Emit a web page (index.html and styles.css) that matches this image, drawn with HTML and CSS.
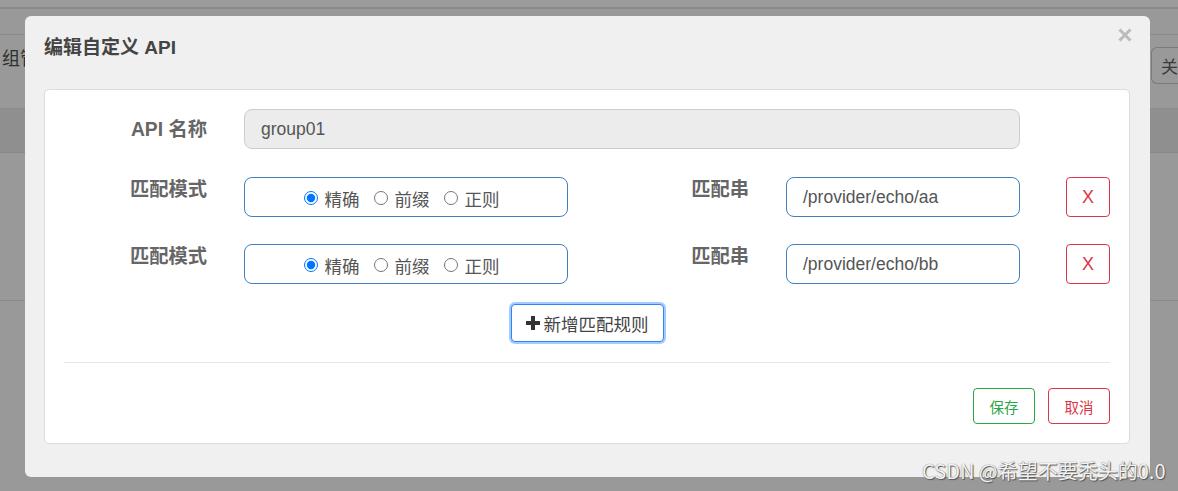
FILE: index.html
```html
<!DOCTYPE html>
<html lang="zh">
<head>
<meta charset="utf-8">
<title>编辑自定义 API</title>
<link rel="stylesheet" href="styles.css">
</head>
<body>
<div class="backdrop">
  <div class="bg-top"></div>
  <div class="bg-bar">
    <span class="bg-text">组管</span>
    <span class="bg-btn">关闭</span>
  </div>
  <div class="bg-thead"></div>
  <div class="bg-rows"></div>
</div>

<div class="overlay">
  <div class="modal">
    <div class="modal-header">
      <h5 class="modal-title">编辑自定义 API</h5>
      <span class="close">
        <svg width="14" height="14" viewBox="0 0 14 14"><path d="M1.5 1.5L12.5 12.5M12.5 1.5L1.5 12.5" stroke="#bbbbbb" stroke-width="3" stroke-linecap="butt"/></svg>
      </span>
    </div>
    <div class="panel">
      <div class="row row-first">
        <label class="label">API 名称</label>
        <div class="input input-disabled input-wide">group01</div>
      </div>
      <div class="row row-rule">
        <label class="label">匹配模式</label>
        <div class="radio-box">
          <label class="radio"><input type="radio" name="m1" checked><span>精确</span></label>
          <label class="radio"><input type="radio" name="m1"><span>前缀</span></label>
          <label class="radio"><input type="radio" name="m1"><span>正则</span></label>
        </div>
        <label class="label label-mid">匹配串</label>
        <div class="input input-blue input-short">/provider/echo/aa</div>
        <button class="btn-x">X</button>
      </div>
      <div class="row row-rule row-third">
        <label class="label">匹配模式</label>
        <div class="radio-box">
          <label class="radio"><input type="radio" name="m2" checked><span>精确</span></label>
          <label class="radio"><input type="radio" name="m2"><span>前缀</span></label>
          <label class="radio"><input type="radio" name="m2"><span>正则</span></label>
        </div>
        <label class="label label-mid">匹配串</label>
        <div class="input input-blue input-short">/provider/echo/bb</div>
        <button class="btn-x">X</button>
      </div>
      <div class="add-wrap">
        <button class="btn-add"><svg class="plus" width="14" height="14" viewBox="0 0 14 14"><path d="M5 0h4v5h5v4H9v5H5V9H0V5h5z" fill="#333"/></svg><span>新增匹配规则</span></button>
      </div>
      <hr class="divider">
      <div class="footer">
        <button class="btn-outline btn-save">保存</button>
        <button class="btn-outline btn-cancel">取消</button>
      </div>
    </div>
  </div>
</div>

<div class="watermark">CSDN @希望不要秃头的0.0</div>
</body>
</html>
```

FILE: styles.css
```css
html, body {
  margin: 0;
  padding: 0;
}
body {
  width: 1178px;
  height: 491px;
  overflow: hidden;
  background: #999999;
  font-family: "Liberation Sans", "Noto Sans CJK SC", sans-serif;
  position: relative;
}

/* background page (dimmed) */
.backdrop {
  display: flex;
  flex-direction: column;
}
.bg-top {
  height: 7px;
  border-bottom: 2px solid #8a8a8a;
  background: #9b9b9b;
}
.bg-bar {
  height: 74px;
  border-top: 25px solid #999;
  border-bottom: 1px solid #8c8c8c;
  position: relative;
  box-shadow: inset 0 1px 0 #8a8a8a;
}
.bg-text {
  position: absolute;
  left: 2px;
  top: 10px;
  width: 23px;
  overflow: hidden;
  white-space: nowrap;
  font-family: "Noto Sans CJK SC", sans-serif;
  font-size: 18px;
  color: #2f2f2f;
}
.bg-btn {
  position: absolute;
  left: 1151px;
  top: 13px;
  width: 26px;
  overflow: hidden;
  white-space: nowrap;
  height: 35px;
  border: 1px solid #7b7b7b;
  border-right: 0;
  border-radius: 6px 0 0 6px;
  font-family: "Noto Sans CJK SC", sans-serif;
  font-size: 17px;
  line-height: 35px;
  padding-left: 9px;
  color: #3a3a3a;
}
.bg-thead {
  height: 43px;
  background: #8f8f8f;
  border-bottom: 1px solid #888;
}
.bg-rows {
  height: 147px;
  border-bottom: 1px solid #8a8a8a;
}

/* modal */
.overlay {
  position: absolute;
  left: 0;
  top: 0;
  width: 1178px;
  height: 491px;
}
.modal {
  margin: 16px 0 0 25px;
  width: 1125px;
  height: 461px;
  box-sizing: border-box;
  background: #f0f0f0;
  border-radius: 6px;
  padding: 0 20px 33px 19px;
}
.modal-header {
  height: 73px;
  box-sizing: border-box;
  padding-top: 18px;
  display: flex;
  justify-content: space-between;
  align-items: flex-start;
}
.modal-title {
  margin: 0;
  font-family: "Liberation Sans", "Noto Sans CJK SC", sans-serif;
  font-weight: bold;
  font-size: 19px;
  line-height: 28px;
  color: #444;
}
.close {
  display: block;
  width: 14px;
  height: 14px;
  margin-top: -6px;
  margin-right: -2px;
}
.close svg { display: block; }

.panel {
  background: #fff;
  border: 1px solid #dcdcdc;
  border-radius: 5px;
  padding: 19px;
  height: 355px;
  box-sizing: border-box;
}

.row {
  display: flex;
  align-items: flex-start;
  height: 40px;
}
.row-first {
  align-items: center;
}
.row-rule { margin-top: 28px; }
.row-third { margin-top: 27px; }

.label {
  width: 143px;
  flex: none;
  text-align: right;
  font-family: "Liberation Sans", "Noto Sans CJK SC", sans-serif;
  font-weight: bold;
  font-size: 19.3px;
  line-height: 26px;
  color: #666;
  margin-right: 37px;
}
.row-first .label { line-height: 40px; padding-top: 1px; }
.label-mid {
  width: 181px;
}

.input {
  box-sizing: border-box;
  height: 40px;
  border-radius: 8px;
  padding-left: 16px;
  font-size: 17.5px;
  line-height: 38px;
  color: #555;
  flex: none;
}
.input-disabled {
  background: #ececec;
  border: 1px solid #cdcdcd;
}
.input-wide { width: 776px; }
.input-blue {
  border: 1px solid #3f7fc0;
  background: #fff;
}
.input-short { width: 234px; }

.radio-box {
  box-sizing: border-box;
  width: 324px;
  height: 40px;
  border: 1px solid #3f7fc0;
  border-radius: 8px;
  display: flex;
  justify-content: center;
  align-items: center;
  padding-top: 2px;
  padding-right: 9px;
  flex: none;
}
.radio {
  display: flex;
  align-items: center;
  margin-right: 14px;
  font-family: "Noto Sans CJK SC", sans-serif;
  font-size: 17.5px;
  color: #555;
}
.radio:last-child { margin-right: 0; }
.radio input {
  margin: 0 7px 0 0;
  width: 14px;
  height: 14px;
}
.radio span { line-height: 24px; padding-top: 2px; }

.btn-x {
  margin-left: 46px;
  width: 44px;
  height: 40px;
  box-sizing: border-box;
  border: 1px solid #dc3545;
  border-radius: 4px;
  background: #fff;
  color: #dc3545;
  font-family: "Liberation Sans", sans-serif;
  font-size: 18px;
  padding: 0;
  flex: none;
}

.add-wrap {
  display: flex;
  justify-content: center;
  margin-top: 20px;
}
.btn-add {
  height: 38px;
  width: 153px;
  box-sizing: border-box;
  border: 1px solid #2f86f0;
  border-radius: 4px;
  background: #fff;
  box-shadow: 0 0 0 2px rgba(90, 160, 255, 0.55);
  display: flex;
  align-items: center;
  justify-content: center;
  padding: 0;
  font-family: "Noto Sans CJK SC", sans-serif;
  font-size: 17.5px;
  color: #444;
}
.plus { margin-right: 4px; }

.divider {
  margin: 20px 0 0 0;
  border: 0;
  border-top: 1px solid #e6e6e6;
  height: 0;
}

.footer {
  display: flex;
  justify-content: flex-end;
  gap: 13px;
  margin-top: 25px;
}
.btn-outline {
  width: 62px;
  height: 36px;
  box-sizing: border-box;
  border-radius: 4px;
  background: #fff;
  font-family: "Noto Sans CJK SC", sans-serif;
  font-size: 14.5px;
  padding: 0;
}
.btn-save {
  border: 1px solid #28a745;
  color: #28a745;
}
.btn-cancel {
  border: 1px solid #dc3545;
  color: #dc3545;
}

.watermark {
  position: absolute;
  left: 922px;
  top: 458px;
  font-family: "Noto Sans CJK SC", sans-serif;
  font-size: 20px;
  line-height: 26px;
  color: #f2f2f2;
  text-shadow: 1px 1px 1px #555, 0 0 1px #666;
  white-space: nowrap;
}
```
